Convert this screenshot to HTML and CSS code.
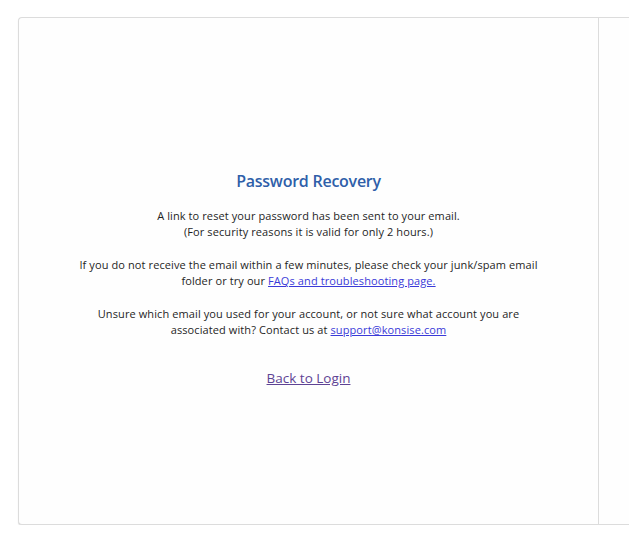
FILE: index.html
```html
<!DOCTYPE html>
<html lang="en">
<head>
    <meta charset="UTF-8">
    <meta name="viewport" content="width=device-width, initial-scale=1.0">
    <title>Password Recovery</title>
    <link rel="stylesheet" href="styles.css">
</head>
<body>
    <div class="page">
        <div class="card">

            <!-- Message -->
            <div class="panel">
                <h1 class="title">Password Recovery</h1>
                <p>A link to reset your password has been sent to your email.<br>(For security reasons it is valid for only 2 hours.)</p>
                <p>If you do not receive the email within a few minutes, please check your junk/spam email<br>folder or try our <a href="#" class="link">FAQs and troubleshooting page.</a></p>
                <p>Unsure which email you used for your account, or not sure what account you are<br>associated with? Contact us at <a href="#" class="link">support@konsise.com</a></p>
                <a href="#" class="back-link">Back to Login</a>
            </div>

            <!-- Side (cut off) -->
            <div class="side"></div>
        </div>
    </div>
</body>
</html>
```

FILE: styles.css
```css
body {
    margin: 0;
    background-color: #ffffff;
    font-family: "Open Sans", Arial, sans-serif;
    color: #1f1f1f;
}
.page {
    padding: 17px 0 0 18px;
}
.card {
    display: flex;
    height: 506px;
    border: 1px solid #dcdcdc;
    border-right: none;
    border-radius: 4px 0 0 4px;
    box-shadow: 0 1px 1px rgba(0, 0, 0, 0.12);
    background-color: #fefefe;
}
.panel {
    width: 579px;
    padding-top: 153px;
    border-right: 1px solid #dcdcdc;
    text-align: center;
}
.side {
    flex: 1;
}
.title {
    margin: 0 0 17px;
    font-size: 16px;
    font-weight: 600;
    line-height: 20px;
    letter-spacing: -0.25px;
    color: #2f5fa9;
}
p {
    margin: 0 0 17px;
    font-size: 11px;
    line-height: 16px;
    letter-spacing: 0.1px;
}
.link {
    color: #3a3ad8;
}
.back-link {
    display: inline-block;
    margin-top: 13px;
    font-size: 13.5px;
    line-height: 20px;
    color: #5e4394;
}
```
